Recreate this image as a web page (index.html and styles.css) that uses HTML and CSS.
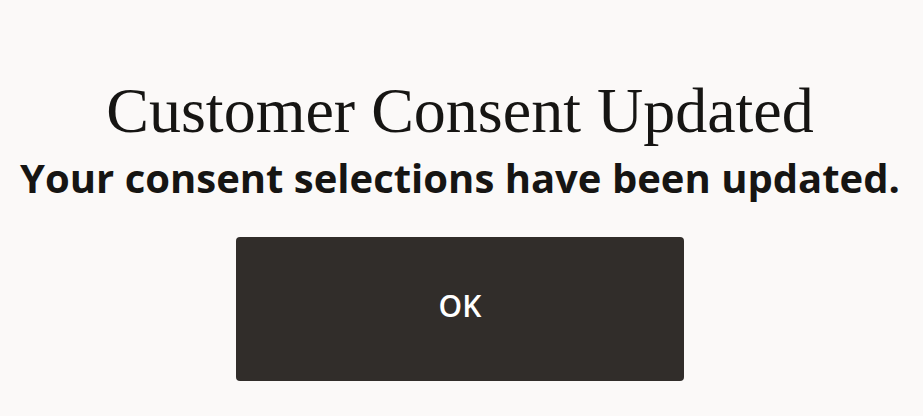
FILE: index.html
```html
<!DOCTYPE html>
<html lang="en">
<head>
<meta charset="utf-8">
<title>Customer Consent Updated</title>
<link rel="stylesheet" href="styles.css">
</head>
<body>
<main class="dialog">
  <h1 class="title">Customer Consent Updated</h1>
  <p class="message">Your consent selections have been updated.</p>
  <button class="ok-button" type="button">OK</button>
</main>
</body>
</html>
```
FILE: styles.css
```css
html, body {
  margin: 0;
  padding: 0;
  background: #fbf9f8;
  height: 100%;
}
.dialog {
  display: flex;
  flex-direction: column;
  align-items: center;
  padding: 76px 3px 0 0;
  color: #161513;
}
.title {
  margin: 0;
  font-family: "Liberation Serif", serif;
  font-weight: 400;
  font-size: 64px;
  line-height: 70px;
  white-space: nowrap;
}
.message {
  margin: 0;
  font-family: "Open Sans", sans-serif;
  font-weight: 700;
  font-size: 40px;
  line-height: 64px;
  white-space: nowrap;
}
.ok-button {
  margin-top: 27px;
  width: 448px;
  height: 144px;
  padding: 0 0 8px;
  border: none;
  border-radius: 4px;
  background: #312d2a;
  color: #ffffff;
  font-family: "Open Sans", sans-serif;
  font-weight: 600;
  font-size: 30px;
}
```
